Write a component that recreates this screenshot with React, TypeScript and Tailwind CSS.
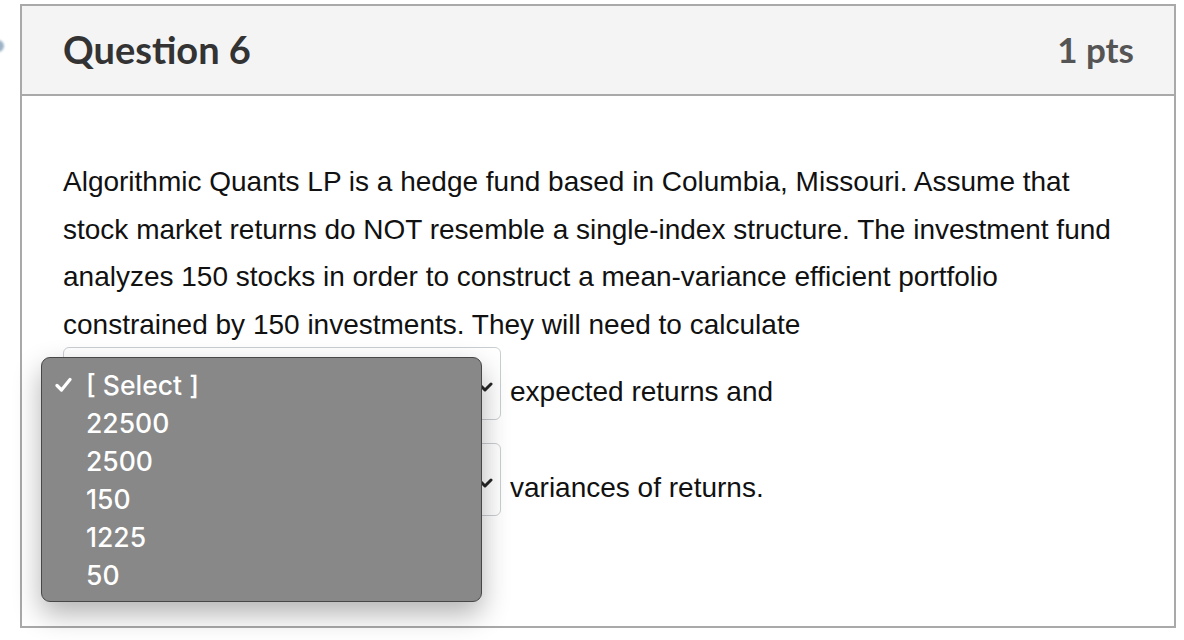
import React from "react"

const options = ["[ Select ]", "22500", "2500", "150", "1225", "50"]

const Chevron = () => (
  <svg width="16" height="10" viewBox="0 0 16 10" fill="none" className="shrink-0">
    <path d="M2 2 L8 8 L14 2" stroke="#262626" strokeWidth="3" strokeLinecap="round" strokeLinejoin="round" />
  </svg>
)

const SelectBox = () => (
  <div className="w-[438px] h-[73px] shrink-0 rounded-[6px] border border-[#c9ced2] bg-white flex items-center justify-end pr-[7px] pt-[8px]">
    <Chevron />
  </div>
)

export default function App() {
  return (
    <div className="relative w-[1184px] h-[640px] bg-white overflow-hidden font-['Liberation_Sans',Arial,sans-serif]">
      {/* stray bit of the side marker */}
      <div className="absolute -left-[8px] top-[40px] w-[12px] h-[12px] rounded-full bg-[#9db3c6] blur-[1px]" />

      <div className="ml-[20px] mt-[4px] w-[1156px] h-[624px] border-2 border-[#a9a9a9] flex flex-col">
        <header className="h-[90px] shrink-0 bg-[#f4f4f4] border-b-2 border-[#a9a9a9] flex items-center justify-between pl-[41px] pr-[40px] pb-[2px] font-['Lato',sans-serif] font-bold">
          <h2 className="text-[38px] text-[#333333]">Question 6</h2>
          <span className="text-[35px] text-[#555555]">1 pts</span>
        </header>

        <div className="relative flex-1 pl-[41px] pt-[62px] text-[28px] text-[#111111]">
          <p className="leading-[47.7px]">
            Algorithmic Quants LP is a hedge fund based in Columbia, Missouri. Assume that
            <br />
            stock market returns do NOT resemble a single-index structure. The investment fund
            <br />
            analyzes 150 stocks in order to construct a mean-variance efficient portfolio
            <br />
            constrained by 150 investments. They will need to calculate
          </p>

          <div className="-mt-[2px] flex items-center gap-[9px]">
            <SelectBox />
            <span className="pt-[17px] leading-[32px]">expected returns and</span>
          </div>
          <div className="mt-[23px] flex items-center gap-[9px]">
            <SelectBox />
            <span className="pt-[17px] leading-[32px]">variances of returns.</span>
          </div>

          {/* open dropdown list */}
          <div className="absolute left-[19px] top-[261px] w-[441px] h-[245px] rounded-[9px] border border-[#474747] bg-[#888888] pt-[8px] shadow-[0_12px_28px_rgba(0,0,0,0.3)] font-['Inter',sans-serif] font-medium text-[26.5px] text-white">
            {options.map((opt, i) => (
              <div key={opt} className="h-[38px] flex items-center">
                <div className="w-[44px] shrink-0 flex justify-end pr-[14px]">
                  {i === 0 && (
                    <svg width="17" height="16" viewBox="0 0 17 16" fill="none">
                      <path d="M2 8.5 L6.5 13 L15 2.5" stroke="white" strokeWidth="3.2" strokeLinecap="round" strokeLinejoin="round" />
                    </svg>
                  )}
                </div>
                <span className="leading-none">{opt}</span>
              </div>
            ))}
          </div>
        </div>
      </div>
    </div>
  )
}
